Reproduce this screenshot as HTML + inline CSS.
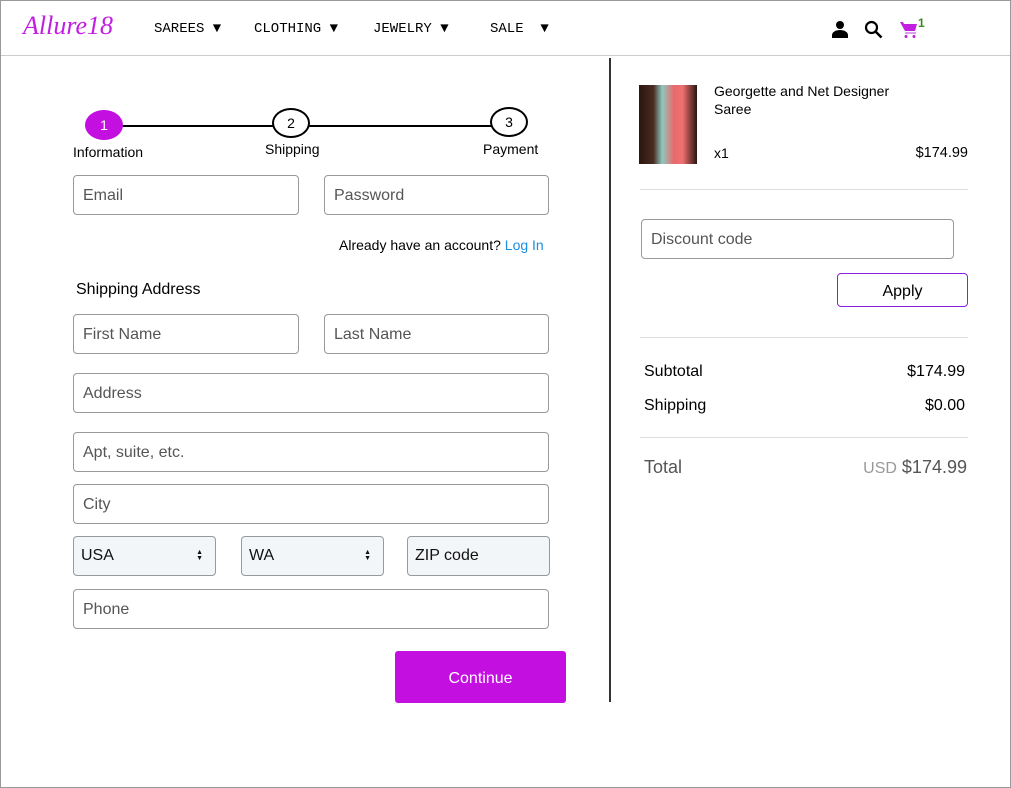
<!DOCTYPE html>
<html><head><style>
*{box-sizing:border-box;margin:0;padding:0}
body{width:1011px;height:788px;background:#fff;font-family:"Liberation Sans",sans-serif;position:relative;overflow:hidden}
.frame{position:absolute;left:0;top:0;width:1011px;height:788px;border:1px solid #999}
.a{position:absolute}
.nav{font-family:"Liberation Mono",monospace;font-size:14px;color:#000;top:21px}
.in{position:absolute;border:1px solid #999;border-radius:4px;height:40px;padding-left:9px;font-size:16px;color:#555;line-height:40px;background:#fff}
.sel{background:#f3f6f9;color:#111;line-height:37px}
.arr{position:absolute;right:12px;top:13px;font-size:7px;line-height:6px;color:#111}
.hr{position:absolute;height:1px;background:#ddd;left:640px;width:328px}
.circ{position:absolute;width:38px;height:30px;border:2px solid #000;border-radius:50%;text-align:center;line-height:26px;font-size:14px;background:#fff}
</style></head><body>
<div class="frame"></div>
<div class="a" style="left:1px;top:55px;width:1009px;height:1px;background:#ccc"></div>
<div class="a" style="left:23px;top:11px;font-family:'Liberation Serif',serif;font-style:italic;font-size:26px;color:#c21ee0">Allure18</div>
<div class="a nav" style="left:154px">SAREES ▼</div>
<div class="a nav" style="left:254px">CLOTHING ▼</div>
<div class="a nav" style="left:373px">JEWELRY ▼</div>
<div class="a nav" style="left:490px">SALE&nbsp; ▼</div>
<svg class="a" style="left:831px;top:20px" width="18" height="18" viewBox="0 0 18 18"><circle cx="9" cy="5" r="4"/><path d="M1 18v-3c0-3 4-5 8-5s8 2 8 5v3z"/></svg>
<svg class="a" style="left:864px;top:20px" width="19" height="19" viewBox="0 0 19 19"><circle cx="7.5" cy="7.5" r="5.5" fill="none" stroke="#000" stroke-width="2.2"/><path d="M11.5 11.5l6 6" stroke="#000" stroke-width="2.5"/></svg>
<svg class="a" style="left:900px;top:21px" width="18" height="18" viewBox="0 0 18 18"><path d="M0 1h3l1 2h13l-2 7H5z" fill="#c21ee0"/><path d="M5 12h11" stroke="#d27ae8" stroke-width="1.5"/><circle cx="6" cy="15.5" r="1.5" fill="#c21ee0"/><circle cx="14" cy="15.5" r="1.5" fill="#c21ee0"/></svg>
<div class="a" style="left:918px;top:16px;font-size:12px;color:#3a8a1a;font-weight:bold">1</div>
<div class="a" style="left:609px;top:58px;width:2px;height:644px;background:#333"></div>

<div class="a" style="left:120px;top:125px;width:372px;height:2px;background:#000"></div>
<div class="circ" style="left:85px;top:110px;background:#c30fe0;border-color:#c30fe0;color:#fff">1</div>
<div class="circ" style="left:272px;top:108px">2</div>
<div class="circ" style="left:490px;top:107px">3</div>
<div class="a" style="left:73px;top:144px;font-size:14px">Information</div>
<div class="a" style="left:265px;top:141px;font-size:14px">Shipping</div>
<div class="a" style="left:483px;top:141px;font-size:14px">Payment</div>

<div class="in" style="left:73px;top:175px;width:226px">Email</div>
<div class="in" style="left:324px;top:175px;width:225px">Password</div>
<div class="a" style="left:339px;top:237px;font-size:14px">Already have an account? <span style="color:#1a8fe0">Log In</span></div>
<div class="a" style="left:76px;top:281px;font-size:16px">Shipping Address</div>
<div class="in" style="left:73px;top:314px;width:226px">First Name</div>
<div class="in" style="left:324px;top:314px;width:225px">Last Name</div>
<div class="in" style="left:73px;top:373px;width:476px">Address</div>
<div class="in" style="left:73px;top:432px;width:476px">Apt, suite, etc.</div>
<div class="in" style="left:73px;top:484px;width:476px">City</div>
<div class="in sel" style="left:73px;top:536px;width:143px;padding-left:7px">USA<div class="arr">▲<br>▼</div></div>
<div class="in sel" style="left:241px;top:536px;width:143px;padding-left:7px">WA<div class="arr">▲<br>▼</div></div>
<div class="in sel" style="left:407px;top:536px;width:143px;padding-left:7px">ZIP code</div>
<div class="in" style="left:73px;top:589px;width:476px">Phone</div>
<div class="a" style="left:395px;top:651px;width:171px;height:52px;background:#c30fe0;border-radius:3px;color:#fff;font-size:16px;text-align:center;line-height:55px">Continue</div>

<div class="a" style="left:639px;top:85px;width:58px;height:79px;background:linear-gradient(90deg,#2a1510 0%,#4a2c22 25%,#8ec9c0 40%,#e86a6a 60%,#f07070 75%,#2a1510 100%)"></div>
<div class="a" style="left:714px;top:82px;font-size:14px;line-height:18px">Georgette and Net Designer<br>Saree</div>
<div class="a" style="left:714px;top:145px;font-size:14px">x1</div>
<div class="a" style="left:870px;top:145px;width:98px;text-align:right;font-size:14.5px">$174.99</div>
<div class="hr" style="top:189px"></div>
<div class="in" style="left:641px;top:219px;width:313px">Discount code</div>
<div class="a" style="left:837px;top:273px;width:131px;height:34px;border:1px solid #8a1ee0;border-radius:4px;text-align:center;line-height:36px;font-size:16px">Apply</div>
<div class="hr" style="top:337px"></div>
<div class="a" style="left:644px;top:363px;font-size:16px">Subtotal</div>
<div class="a" style="left:860px;top:363px;width:105px;text-align:right;font-size:16px">$174.99</div>
<div class="a" style="left:644px;top:397px;font-size:16px">Shipping</div>
<div class="a" style="left:860px;top:397px;width:105px;text-align:right;font-size:16px">$0.00</div>
<div class="hr" style="top:437px"></div>
<div class="a" style="left:644px;top:457px;font-size:18px;color:#555">Total</div>
<div class="a" style="left:820px;top:457px;width:147px;text-align:right;font-size:18px;color:#555"><span style="font-size:16px;color:#999">USD</span>&nbsp;$174.99</div>
</body></html>
